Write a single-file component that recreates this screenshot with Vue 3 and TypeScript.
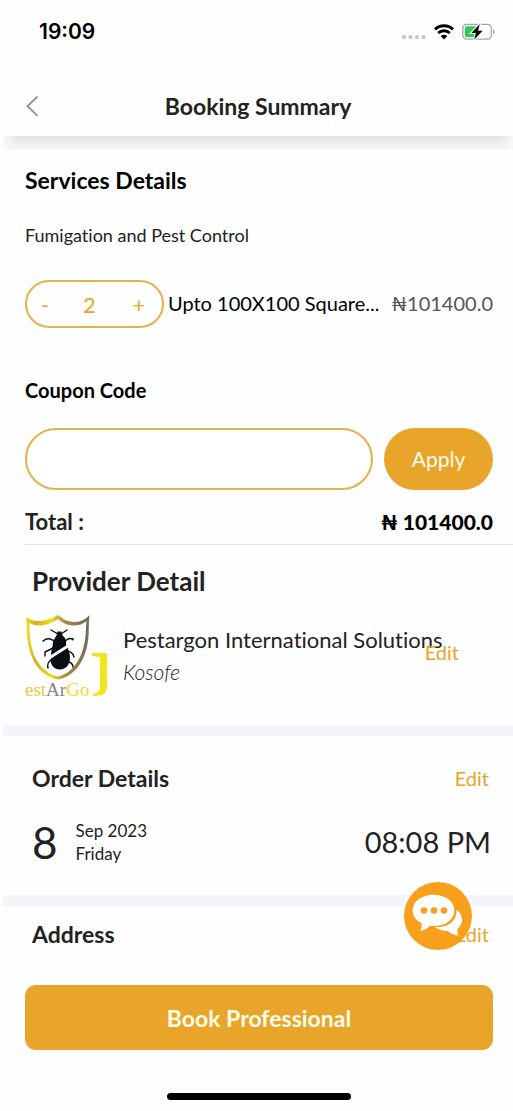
<script setup lang="ts">
import { ref } from 'vue'

const quantity = ref(2)
const coupon = ref('')
const total = '101400.0'
</script>

<template>
  <div class="screen">
    <div class="status">
      <span class="clock">19:09</span>
      <div class="indicators">
        <svg width="24" height="6" viewBox="0 0 24 6" fill="#c8c8c8" aria-hidden="true">
          <rect x="0" y="1" width="4" height="4" rx="1.5" />
          <rect x="6.5" y="1" width="4" height="4" rx="1.5" />
          <rect x="13" y="1" width="4" height="4" rx="1.5" />
          <rect x="19.5" y="1" width="4" height="4" rx="1.5" />
        </svg>
        <svg class="wifi" width="20" height="16" viewBox="0 0 20 16" aria-hidden="true">
          <path d="M1 5.4C6 .6 14 .6 19 5.4M4.2 9c3.400-3.100 8.200-3.100 11.600 0" fill="none" stroke="#000" stroke-width="2.900" />
          <path d="M6.600 12.100c2-1.800 4.800-1.800 6.800 0L10 15.500z" fill="#000" />
        </svg>
        <svg width="34" height="18" viewBox="0 0 34 18" aria-hidden="true">
          <rect x=".8" y="1.300" width="28.600" height="14.800" rx="4" fill="#fff" stroke="#a5a5a5" stroke-width="1.300" />
          <path d="M4.800 3.300H14v10.900H4.800a2 2 0 0 1-2-2V5.300a2 2 0 0 1 2-2z" fill="#35c759" />
          <path d="M31 6.200c2 .8 2 4.200 0 5z" fill="#a5a5a5" />
          <path d="M17.800 1 9.300 10h4.600L12.200 16.800 20.600 7.700h-4.500z" fill="#000" stroke="#fff" stroke-width="2" paint-order="stroke" />
        </svg>
      </div>
    </div>

    <header class="bar">
      <button class="back" type="button" aria-label="Back">
        <svg width="14" height="22" viewBox="0 0 14 22" aria-hidden="true">
          <path d="M12.500 1.500 2.500 11.200 12.500 20.800" fill="none" stroke="#8f8cab" stroke-width="1.800" />
        </svg>
      </button>
      <h1>Booking Summary</h1>
    </header>

    <main>
      <div class="shade"></div>

      <section class="services">
        <h2>Services Details</h2>
        <p class="category">Fumigation and Pest Control</p>
        <div class="item">
          <div class="stepper">
            <button type="button" aria-label="Decrease" @click="quantity > 1 && quantity--">-</button>
            <output>{{ quantity }}</output>
            <button type="button" aria-label="Increase" @click="quantity++">+</button>
          </div>
          <span class="item-name">Upto 100X100 Square...</span>
          <span class="price">₦{{ total }}</span>
        </div>
        <label class="coupon-label" for="coupon">Coupon Code</label>
        <div class="coupon">
          <input id="coupon" v-model="coupon" type="text" />
          <button type="button">Apply</button>
        </div>
        <div class="total">
          <span>Total :</span>
          <strong>₦ {{ total }}</strong>
        </div>
      </section>

      <section class="provider">
        <h2>Provider Detail</h2>
        <div class="provider-row">
          <svg class="logo" width="84" height="88" viewBox="0 0 84 88" role="img" aria-label="PestArGon">
            <defs>
              <linearGradient id="gold" x1="0" x2="1">
                <stop offset="0" stop-color="#efe015" />
                <stop offset=".15" stop-color="#d9ad20" />
                <stop offset=".4" stop-color="#f0df12" />
                <stop offset=".6" stop-color="#b08d45" />
                <stop offset="1" stop-color="#706761" />
              </linearGradient>
            </defs>
            <path fill="url(#gold)" fill-rule="evenodd" d="M1 3c5 3 8 4 12 4C20 7 26 5 33 1c6 5 11 7 17 7 6 0 11-3 14.500-7-1 8-.5 13-1 21C62 43 52 62 33 65.500 14 62 4 44 2 22 1.500 14 2 9 1 3zm3.500 6C4 12 4.500 18 5 23c1.500 19 11 36 28 39.500C49 59 58.500 42 60.500 22c.5-6 .5-10 1-15C58 10 54 11.500 49 11.500 43 11.500 38 9.500 33 5c-6 4-12 6.500-19 6.500-4 0-7-1-9.500-2.500z" />
            <g fill="none" stroke="#0b0e14" stroke-width="1.400" stroke-linecap="round">
              <path d="M33 20l-7-4M36 20l6-4M31 29c-3-4-8-6-13-2M39 29c3-5 6-5 9-4M28 34l-8 4v4M41 37c4 0 7 2 8 6M26 46c-3 2-4 4-3 8M44 48c3 1 4 3 4 5" />
            </g>
            <path d="M32.500 17.500h4l1 4c3 2 4 5 3.500 9 2 4 4 8 4 13 0 7-4 12-10 12s-10-5-9.500-11c.5-4 1-9 2-12 0-5 2-8 4-11z" fill="#0b0e14" />
            <path d="M21 46 43 32" stroke="#fff" stroke-width="2.800" />
            <circle cx="47.500" cy="25.500" r="1" fill="#0b0e14" />
            <text x="0" y="82" class="logo-text"><tspan fill="#dfd13b">est</tspan><tspan fill="#858585">Ar</tspan><tspan fill="#ece12b">Go</tspan></text>
            <path d="M67 39h15v34c0 6-4 9-14 9v-2c5-1 7-3 7-8V43l-8-1z" fill="#f1e51c" />
          </svg>
          <div class="provider-text">
            <p class="provider-name">Pestargon International Solutions</p>
            <p class="provider-place">Kosofe</p>
          </div>
          <button class="edit provider-edit" type="button">Edit</button>
        </div>
      </section>

      <section class="order">
        <div class="heading">
          <h2>Order Details</h2>
          <button class="edit" type="button">Edit</button>
        </div>
        <div class="schedule">
          <span class="day">8</span>
          <span class="date">Sep 2023<br />Friday</span>
          <time>08:08 PM</time>
        </div>
      </section>

      <section class="address">
        <div class="heading">
          <h2>Address</h2>
          <button class="edit" type="button">Edit</button>
        </div>
        <button class="chat" type="button" aria-label="Chat">
          <svg width="68" height="68" viewBox="0 0 68 68" aria-hidden="true">
            <circle cx="34" cy="34" r="34" fill="#f8a01c" />
            <path fill="#fff" d="M52.700 27.500C59 33 60 41 54 46.500c-1 2-1 4 .5 7-5-.5-8-2-10.500-4.500-5 0-9-1-13-4C43 46 53 40 52.700 27.500z" />
            <path fill="#fff" d="M29.500 12.700C41 12.700 50.300 19 50.300 28.400S41 44 29.500 44c-1.500 0-2.500 0-3.500-.3-3 2.800-6 4.500-10 5.300 1.500-3 2-5 1.500-8C12 38.500 8.700 34 8.700 28.400c0-9.400 9.300-15.700 20.800-15.700z" />
            <g fill="#f8a01c">
              <circle cx="20" cy="28.500" r="3.300" />
              <circle cx="30" cy="28.500" r="3.300" />
              <circle cx="40" cy="28.500" r="3.300" />
            </g>
          </svg>
        </button>
      </section>
    </main>

    <footer>
      <button class="book" type="button">Book Professional</button>
      <div class="home"></div>
    </footer>
  </div>
</template>

<style>
body {
  margin: 0;
  background: #fefefe;
}
</style>

<style scoped>
.screen {
  box-sizing: border-box;
  min-height: 100vh;
  display: flex;
  flex-direction: column;
  padding-left: 3px;
  overflow: hidden;
  font-family: Lato, "Noto Sans", sans-serif;
  font-size: 20px;
  font-variant-ligatures: none;
  color: #222;
}
h1, h2, p { margin: 0; }
h1, h2 { font-size: 23px; line-height: 28px; font-weight: 700; }
button {
  font: inherit;
  padding: 0;
  border: 0;
  background: none;
  cursor: pointer;
}
svg { display: block; }

.status {
  display: flex;
  justify-content: space-between;
  align-items: center;
  height: 64px;
  padding: 0 17px 0 36px;
}
.clock {
  font: 600 21px/28px Inter, sans-serif;
  color: #000;
}
.indicators { display: flex; align-items: center; gap: 8px; }
.indicators svg:first-child { margin-top: 10px; }

.bar {
  box-sizing: border-box;
  display: grid;
  grid-template-columns: 56px 1fr 56px;
  align-items: center;
  height: 72px;
  padding-top: 12px;
}
.back { padding-left: 22px; }
h1 { text-align: center; }

.shade {
  height: 14px;
  background: linear-gradient(#e3e3e3, #f7f7f7);
  box-shadow: inset 16px 0 12px -10px #fafafa, inset -16px 0 12px -10px #fafafa;
}

.services { padding: 16px 20px 0 22px; color: #000; }
.category { margin-top: 28px; font-size: 18px; line-height: 26px; color: #222; }
.item { display: flex; align-items: center; margin-top: 32px; }
.stepper {
  box-sizing: border-box;
  flex: none;
  display: grid;
  grid-template-columns: 36px 1fr 46px;
  align-items: center;
  width: 139px;
  height: 48px;
  border: 2px solid #e8b04a;
  border-radius: 24px;
  color: #e9a529;
  font-size: 22px;
  text-align: center;
}
.stepper button { height: 44px; color: inherit; }
.item-name {
  flex: 1;
  min-width: 0;
  margin: 0 8px 0 4px;
  overflow: hidden;
  line-height: 28px;
  white-space: nowrap;
  text-overflow: ellipsis;
}
.item-name, .price { padding-bottom: 2px; }
.price { color: #555; line-height: 28px; }
.coupon-label {
  display: block;
  margin-top: 48px;
  font-weight: 700;
  line-height: 28px;
}
.coupon { display: flex; gap: 11px; margin-top: 24px; }
.coupon input {
  box-sizing: border-box;
  flex: 1;
  min-width: 0;
  height: 62px;
  padding: 0 24px;
  border: 2px solid #e8b04a;
  border-radius: 31px;
  background: #fff;
  font: inherit;
}
.coupon button {
  width: 109px;
  padding-bottom: 2px;
  border-radius: 31px;
  background: #e9a529;
  color: #fffbe9;
  font-size: 21px;
}
.total {
  display: flex;
  justify-content: space-between;
  margin-right: -20px;
  padding: 18px 20px 8px 0;
  border-bottom: 1px solid #e4e4e4;
  font-size: 22px;
  font-weight: 700;
  line-height: 28px;
}
.total span { color: #222; }
.total strong { font-size: 21px; }

.provider { padding: 20px 22px 23px; border-bottom: 11px solid #f4f5f9; }
.provider h2 { padding-left: 7px; font-size: 26px; line-height: 32px; }
.provider-row { display: flex; position: relative; margin-top: 17px; }
.logo { flex: none; }
.logo-text { font: 19px "Liberation Serif", serif; }
.provider-text { padding: 10px 0 0 14px; white-space: nowrap; }
.provider-name { font-size: 22px; line-height: 32px; }
.provider-place { font-size: 21px; line-height: 32px; font-style: italic; font-weight: 300; }
.edit { color: #e9a529; font-size: 20px; line-height: 28px; }
.provider-edit { position: absolute; top: 24px; right: 32px; }

.order { padding: 28px 22px 28px 29px; border-bottom: 11px solid #f4f5f9; }
.heading { display: flex; justify-content: space-between; align-items: center; padding-right: 2px; }
.schedule { display: flex; align-items: center; margin: 27px 0 2px; }
.day { font-size: 44px; line-height: 46px; }
.date { margin-left: 18px; font-size: 17px; line-height: 23px; }
.schedule time { margin-left: auto; font-size: 29px; line-height: 40px; }

.address { position: relative; padding: 14px 22px 28px 29px; }
.chat { position: absolute; top: -24px; right: 41px; border-radius: 50%; }

footer { margin-top: auto; padding: 0 20px 11px 22px; }
.book {
  width: 100%;
  height: 65px;
  border-radius: 11px;
  background: #e9a529;
  color: #fffbe9;
  font-size: 23px;
  font-weight: 700;
}
.home {
  width: 184px;
  height: 7px;
  margin: 43px auto 0;
  border-radius: 4px;
  background: #000;
}
</style>
